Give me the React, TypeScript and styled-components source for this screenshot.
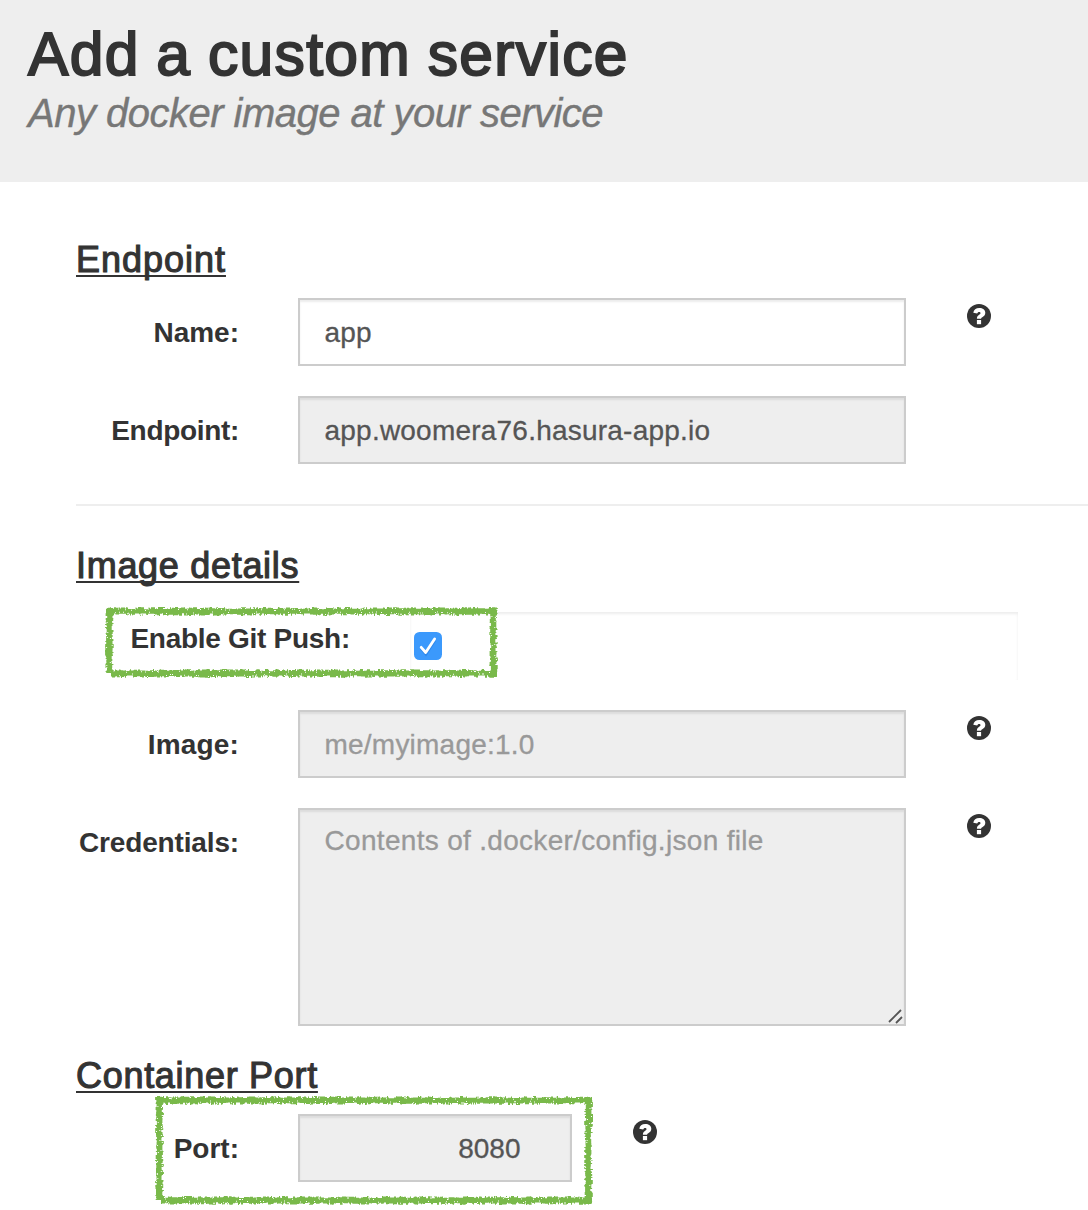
import React from "react";
import styled, { createGlobalStyle } from "styled-components";

const GlobalStyle = createGlobalStyle`
  *, *::before, *::after { box-sizing: border-box; }
  body {
    margin: 0;
    background: #fff;
    color: #333;
    font-family: "Liberation Sans", Arial, sans-serif;
    font-size: 28px;
    line-height: 40px;
    overflow-x: hidden;
  }
`;

const Page = styled.div`
  position: relative;
  width: 1088px;
  height: 1210px;
  overflow: hidden;
`;

const Header = styled.header`
  height: 182px;
  padding: 21px 28px 0;
  background: #eee;
`;

const Title = styled.h1`
  margin: 0;
  font-size: 60.5px;
  line-height: 66px;
  font-weight: 400;
  letter-spacing: 1.35px;
  word-spacing: -1.5px;
  -webkit-text-stroke: 2px #333;
  white-space: nowrap;
`;

const Subtitle = styled.p`
  margin: 5px 0 0;
  font-size: 40px;
  line-height: 42px;
  font-style: italic;
  letter-spacing: -0.51px;
  -webkit-text-stroke: 0.4px #777;
  color: #777;
  white-space: nowrap;
`;

const Form = styled.form`
  display: flex;
  flex-direction: column;
  padding-left: 76px;
`;

const Section = styled.section<{ $top: number }>`
  display: flex;
  flex-direction: column;
  padding-top: ${(p) => p.$top}px;
`;

const Heading = styled.h2<{ $gap: number; $tracking?: number }>`
  margin: 0 0 ${(p) => p.$gap}px;
  font-size: 36px;
  line-height: 40px;
  font-weight: 400;
  letter-spacing: ${(p) => p.$tracking ?? 0.7}px;
  -webkit-text-stroke: 1.1px #333;
  text-decoration: underline;
  text-decoration-thickness: 2px;
  text-underline-offset: 3px;
  text-decoration-skip-ink: none;
  align-self: flex-start;
`;

const Row = styled.div`
  display: flex;
  align-items: flex-start;
  margin-bottom: 30px;
`;

const Label = styled.label<{ $tracking?: number }>`
  width: 163px;
  padding-top: 15px;
  text-align: right;
  font-weight: 700;
  letter-spacing: ${(p) => p.$tracking ?? 0}px;
  white-space: nowrap;
`;

const Input = styled.input<{ $width?: number }>`
  width: ${(p) => p.$width ?? 608}px;
  height: 68px;
  margin: 0 0 0 59px;
  padding: 14px 24px 12px 24.5px;
  border: 2px solid #ccc;
  border-radius: 0;
  background: #fff;
  box-shadow: inset 0 2px 2px rgba(0, 0, 0, 0.075);
  color: #555;
  font: inherit;
  letter-spacing: 0.22px;
  -webkit-text-stroke: 0.3px;
  &:disabled { background: #eee; color: #555; opacity: 1; }
  &::placeholder { color: #999; opacity: 1; }
`;

const PortInput = styled(Input)`
  padding-right: 49.5px;
  letter-spacing: 0;
  text-align: right;
`;

const AreaWrap = styled.div`
  position: relative;
  margin-left: 59px;
  height: 218px;
`;

const Area = styled.textarea`
  display: block;
  width: 608px;
  height: 218px;
  padding: 11px 24px 10px 24.5px;
  border: 2px solid #ccc;
  border-radius: 0;
  background: #eee;
  box-shadow: inset 0 2px 2px rgba(0, 0, 0, 0.075);
  font: inherit;
  letter-spacing: 0.31px;
  -webkit-text-stroke: 0.3px;
  resize: none;
  &::placeholder { color: #999; opacity: 1; }
`;

const Grip = styled.svg`
  position: absolute;
  right: 2px;
  bottom: 2px;
`;

const Help = styled.svg`
  display: block;
  width: 24px;
  height: 24px;
  margin: 6px 0 0 61px;
`;

const Rule = styled.hr`
  width: 100%;
  height: 2px;
  margin: 10px 0 0;
  border: 0;
  background: #eee;
`;

const CheckLabel = styled(Label)`
  width: 274px;
  padding-top: 7px;
`;

const CheckField = styled.div`
  width: 608px;
  height: 68px;
  margin-left: 60px;
  padding: 20px 0 0 4px;
  box-shadow: inset 0 2px 3px rgba(0, 0, 0, 0.075);
`;

const CheckBox = styled.svg`
  display: block;
  width: 28px;
  height: 28px;
`;

const Marker = styled.svg<{ $x: number; $y: number }>`
  position: absolute;
  left: ${(p) => p.$x}px;
  top: ${(p) => p.$y}px;
  pointer-events: none;
`;

function HelpIcon() {
  return (
    <Help viewBox="0 0 24 24" aria-label="Help">
      <circle cx="12" cy="12" r="12" fill="#333" />
      <path d="M6.300 8.800C6.700 5.600 8.900 4 12.300 4c3.500 0 6 1.800 6 4.700 0 2.300-1.300 3.300-2.700 4.200-1 .7-1.500 1-1.500 1.900H9.900c0-2.300.9-3.200 2.300-4.100.9-.6 1.300-1 1.300-1.700 0-.7-.5-1.100-1.300-1.100-1.100 0-1.700.6-2 1.700z" fill="#fff" />
      <rect x="9.900" y="16" width="4.200" height="4.200" fill="#fff" />
    </Help>
  );
}

/* Crayon-like outline: a solid core whose edges wander, with small flecks missing. */
function crayonPath(width: number, height: number, seed: number) {
  let s = seed;
  const rand = () => {
    s = (s * 1664525 + 1013904223) >>> 0;
    return s / 4294967296;
  };
  let d = "";
  const band = (end: number, at: number, vertical: boolean, start: number) => {
    let near = 1;
    let far = 8;
    const cell = (a: number, b: number, size: number) => {
      d += vertical ? `M${b} ${a}h${size}v1h-${size}z` : `M${a} ${b}h1v${size}h-1z`;
    };
    for (let a = start; a < end; a++) {
      if (rand() < 0.6) near = rand() * 2.2;
      if (rand() < 0.6) far = 6.300 + rand() * 2.700;
      const top = Math.round(near * 10) / 10;
      const bottom = Math.round(far * 10) / 10;
      if (rand() < 0.2) {
        const hole = rand() < 0.5 ? top + 0.8 : bottom - 2;
        const first = Math.round((hole - top) * 10) / 10;
        cell(a, at + top, first);
        cell(a, at + hole + 1, Math.round((bottom - hole - 1) * 10) / 10);
      } else {
        cell(a, at + top, Math.round((bottom - top) * 10) / 10);
      }
    }
  };
  band(width - 1, 0, false, 1);
  band(width - 1, height - 9, false, 6);
  band(height - 5, 0, true, 1);
  band(height - 1, width - 9, true, 1);
  return d;
}

function Crayon(p: { x: number; y: number; width: number; height: number; seed: number }) {
  return (
    <Marker $x={p.x} $y={p.y} width={p.width} height={p.height} aria-hidden>
      <path d={crayonPath(p.width, p.height, p.seed)} fill="#79b94a" fillRule="nonzero" />
    </Marker>
  );
}

export default function App() {
  return (
    <Page>
      <GlobalStyle />
      <Header>
        <Title>Add a custom service</Title>
        <Subtitle>Any docker image at your service</Subtitle>
      </Header>
      <Form>
        <Section $top={58}>
          <Heading $gap={18} $tracking={0.98}>Endpoint</Heading>
          <Row>
            <Label>Name:</Label>
            <Input defaultValue="app" />
            <HelpIcon />
          </Row>
          <Row>
            <Label $tracking={-0.32}>Endpoint:</Label>
            <Input disabled defaultValue="app.woomera76.hasura-app.io" />
          </Row>
        </Section>
        <Rule />
        <Section $top={40}>
          <Heading $gap={26}>Image details</Heading>
          <Row>
            <CheckLabel $tracking={-0.28}>Enable Git Push:</CheckLabel>
            <CheckField>
              <CheckBox viewBox="0 0 28 28" role="checkbox" aria-checked="true">
                <rect width="28" height="28" rx="5.500" fill="#3b99fc" />
                <path d="M7.200 15.600l4.700 5.400L20.800 7.200" fill="none" stroke="#1a6fd0" strokeOpacity=".4" strokeWidth="3" transform="translate(0 1)" />
                <path d="M7.200 15.300l4.500 5.200L20.600 7" fill="none" stroke="#fff" strokeWidth="2.800" strokeLinecap="round" strokeLinejoin="round" />
              </CheckBox>
            </CheckField>
          </Row>
          <Row>
            <Label $tracking={0.15}>Image:</Label>
            <Input disabled placeholder="me/myimage:1.0" />
            <HelpIcon />
          </Row>
          <Row>
            <Label $tracking={-0.15}>Credentials:</Label>
            <AreaWrap>
              <Area disabled placeholder="Contents of .docker/config.json file" />
              <Grip width="16" height="16" viewBox="0 0 16 16">
                <path d="M1 14L13 2M8 15l6-6" stroke="#555" strokeWidth="1.800" fill="none" />
              </Grip>
            </AreaWrap>
            <HelpIcon />
          </Row>
        </Section>
        <Section $top={0}>
          <Heading $gap={18}>Container Port</Heading>
          <Row>
            <Label>Port:</Label>
            <PortInput $width={274} disabled defaultValue="8080" />
            <HelpIcon />
          </Row>
        </Section>
      </Form>
      <Crayon x={105} y={607} width={393} height={71} seed={17} />
      <Crayon x={155} y={1096} width={438} height={109} seed={91} />
    </Page>
  );
}
